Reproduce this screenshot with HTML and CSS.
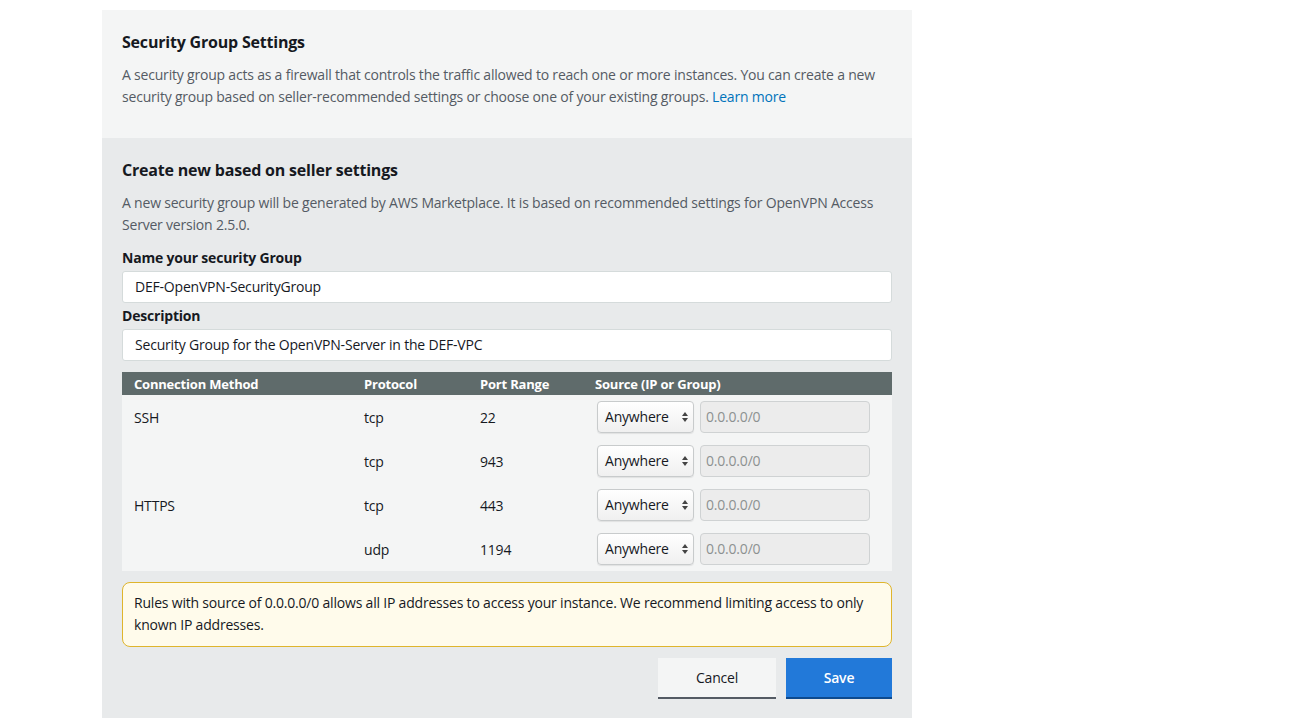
FILE: index.html
```html
<!DOCTYPE html>
<html>
<head>
<meta charset="utf-8">
<link rel="stylesheet" href="styles.css">
</head>
<body>
<div class="panel">
  <section class="intro">
    <h2 class="title">Security Group Settings</h2>
    <p class="text">A security group acts as a firewall that controls the traffic allowed to reach one or more instances. You can create a new security group based on seller-recommended settings or choose one of your existing groups. <a class="link" href="#">Learn more</a></p>
  </section>
  <section class="create">
    <h2 class="title">Create new based on seller settings</h2>
    <p class="text">A new security group will be generated by AWS Marketplace. It is based on recommended settings for OpenVPN Access Server version 2.5.0.</p>
    <label class="label">Name your security Group</label>
    <div class="field">DEF-OpenVPN-SecurityGroup</div>
    <label class="label">Description</label>
    <div class="field">Security Group for the OpenVPN-Server in the DEF-VPC</div>
    <div class="table">
      <div class="row head">
        <div>Connection Method</div><div>Protocol</div><div>Port Range</div><div>Source (IP or Group)</div>
      </div>
      <div class="row">
        <div>SSH</div><div>tcp</div><div>22</div>
        <div class="src"><div class="select">Anywhere<span class="arrows"></span></div><div class="ip">0.0.0.0/0</div></div>
      </div>
      <div class="row">
        <div></div><div>tcp</div><div>943</div>
        <div class="src"><div class="select">Anywhere<span class="arrows"></span></div><div class="ip">0.0.0.0/0</div></div>
      </div>
      <div class="row">
        <div>HTTPS</div><div>tcp</div><div>443</div>
        <div class="src"><div class="select">Anywhere<span class="arrows"></span></div><div class="ip">0.0.0.0/0</div></div>
      </div>
      <div class="row">
        <div></div><div>udp</div><div>1194</div>
        <div class="src"><div class="select">Anywhere<span class="arrows"></span></div><div class="ip">0.0.0.0/0</div></div>
      </div>
    </div>
    <div class="warning">Rules with source of 0.0.0.0/0 allows all IP addresses to access your instance. We recommend limiting access to only known IP addresses.</div>
    <div class="actions">
      <button class="btn cancel">Cancel</button>
      <button class="btn save">Save</button>
    </div>
  </section>
</div>
</body>
</html>
```
FILE: styles.css
```css
body {
  margin: 0;
  background: #fff;
  font-family: "Open Sans", "Liberation Sans", sans-serif;
  color: #16191f;
  letter-spacing: -0.2px;
}
.panel {
  width: 810px;
  margin: 10px 0 0 102px;
}
.intro {
  background: #f4f5f5;
  padding: 21px 20px 30px;
}
.create {
  background: #e8eaeb;
  padding: 21px 20px 19px;
}
.title {
  margin: 0 0 11px;
  font-size: 16px;
  font-weight: 700;
  line-height: 22px;
}
.text {
  margin: 0;
  font-size: 14px;
  line-height: 22px;
  color: #545b64;
}
.link {
  color: #0073bb;
  text-decoration: none;
}
.create .text {
  margin-bottom: 12px;
}
.label {
  display: block;
  font-size: 14px;
  font-weight: 700;
  line-height: 20px;
  margin-bottom: 3px;
}
.field {
  height: 32px;
  box-sizing: border-box;
  background: #fff;
  border: 1px solid #d5dbdb;
  border-radius: 3px;
  padding: 0 12px;
  font-size: 14px;
  line-height: 30px;
  margin-bottom: 3px;
}
.table {
  margin-top: 11px;
  background: #f4f5f5;
}
.row {
  display: grid;
  grid-template-columns: 230px 116px 115px 1fr;
  align-items: center;
  height: 44px;
  font-size: 14px;
  padding-left: 12px;
}
.row.head {
  height: 23px;
  background: #5f6b6b;
  color: #fff;
  font-size: 13px;
  font-weight: 700;
}
.src {
  display: flex;
  gap: 6px;
  margin-left: 2px;
}
.select {
  width: 97px;
  height: 32px;
  box-sizing: border-box;
  border: 1px solid #c8cbcc;
  border-radius: 4px;
  background: linear-gradient(#ffffff, #f0f0f0);
  box-shadow: 0 1px 1px rgba(0,0,0,0.08);
  padding-left: 7px;
  line-height: 30px;
  position: relative;
}
.arrows {
  position: absolute;
  right: 5px;
  top: 10px;
  width: 0;
  height: 0;
  border-left: 3px solid transparent;
  border-right: 3px solid transparent;
  border-bottom: 4px solid #444;
}
.arrows::after {
  content: "";
  position: absolute;
  left: -3px;
  top: 6px;
  border-left: 3px solid transparent;
  border-right: 3px solid transparent;
  border-top: 4px solid #444;
}
.ip {
  width: 170px;
  height: 32px;
  box-sizing: border-box;
  border: 1px solid #cfd2d3;
  border-radius: 4px;
  background: #ececec;
  color: #8c9191;
  padding-left: 5px;
  line-height: 30px;
}
.warning {
  margin-top: 11px;
  background: #fffbeb;
  border: 1px solid #dfb52c;
  border-radius: 8px;
  padding: 9px 11px 10px;
  font-size: 14px;
  line-height: 22px;
}
.actions {
  display: flex;
  justify-content: flex-end;
  gap: 10px;
  margin-top: 11px;
}
.btn {
  height: 41px;
  border: none;
  font-family: inherit;
  letter-spacing: inherit;
  font-size: 14px;
  padding: 0;
}
.cancel {
  width: 118px;
  background: #f4f5f5;
  color: #16191f;
  border-bottom: 2px solid #545b64;
}
.save {
  width: 106px;
  background: #2279d9;
  color: #fff;
  font-weight: 600;
  border-bottom: 2px solid #0d4a8e;
}
```
